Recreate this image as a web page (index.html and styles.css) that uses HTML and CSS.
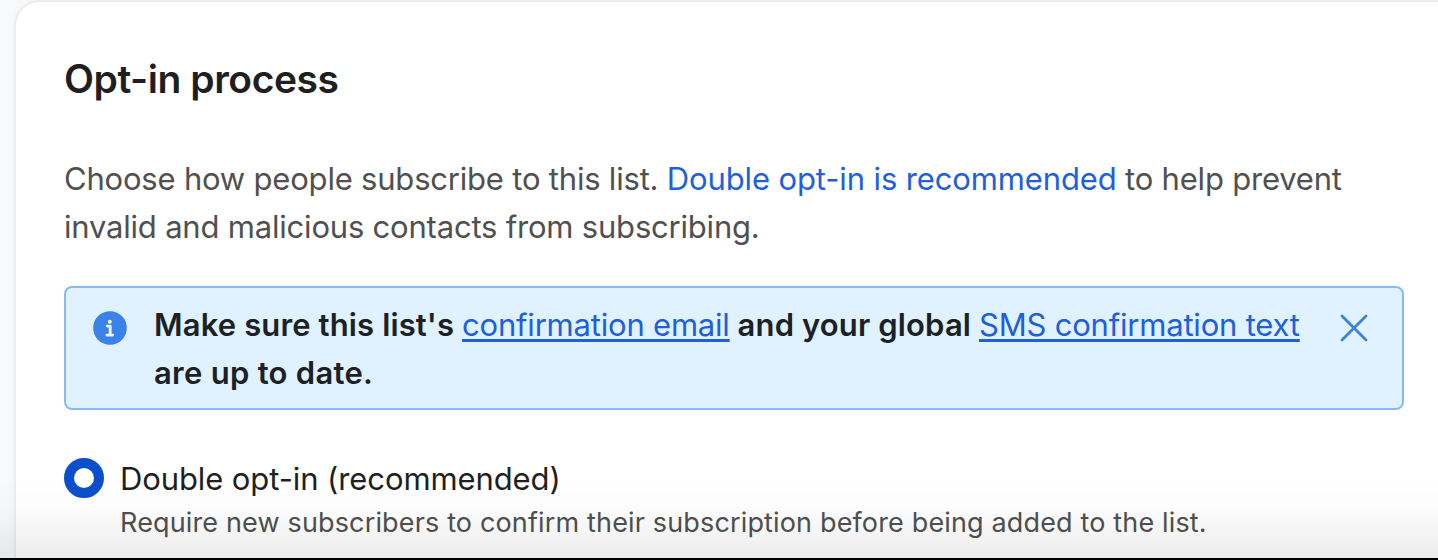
FILE: index.html
```html
<!DOCTYPE html>
<html lang="en">
<head>
  <meta charset="UTF-8" />
  <meta name="viewport" content="width=device-width, initial-scale=1.0" />
  <title>Opt-in process</title>
  <link rel="stylesheet" href="styles.css">
</head>
<body>
  <main class="card">
    <h1 class="title">Opt-in process</h1>
    <p class="intro">Choose how people subscribe to this list. <a href="#">Double opt-in is recommended</a> to help prevent<br>invalid and malicious contacts from subscribing.</p>
    <div class="notice">
      <svg class="notice-icon" viewBox="0 0 34 34">
        <circle cx="17" cy="17" r="16.8" fill="#3b82e8" />
        <circle cx="16.8" cy="10.8" r="2" fill="#e8f5ff" />
        <path d="M14.2 15.1h3v9M13.9 24.1h5.8" fill="none" stroke="#e8f5ff" stroke-width="2.9" stroke-linecap="round" stroke-linejoin="round" />
      </svg>
      <p class="notice-text">Make sure this list's <a href="#">confirmation email</a> and your global <a href="#">SMS confirmation text</a><br><span class="notice-end">are up to date.</span></p>
      <button class="close" aria-label="Close">
        <svg viewBox="0 0 28 28">
          <path d="M2 2l24 24M26 2L2 26" fill="none" stroke="#4280d8" stroke-width="2.8" stroke-linecap="round" />
        </svg>
      </button>
    </div>
    <label class="option">
      <input type="radio" class="radio" name="optin" checked>
      <span class="option-body">
        <span class="option-label">Double opt-in (recommended)</span>
        <span class="option-help">Require new subscribers to confirm their subscription before being added to the list.</span>
      </span>
    </label>
  </main>
  <div class="fade"></div>
</body>
</html>
```
FILE: styles.css
```css
* {
  box-sizing: border-box;
}

body {
  margin: 0;
  height: 560px;
  padding: 2px 0 0 16px;
  background: #f8f9fb;
  font-family: 'Inter', sans-serif;
  color: #1f1f1f;
  overflow: hidden;
}

.card {
  height: 558px;
  padding: 49px 0 0 48px;
  background: #fff;
  border-radius: 24px 0 0 0;
  box-shadow: 0 0 0 2px #ebecee, 0 0 8px rgba(0, 0, 0, 0.06);
}

.title {
  margin: 0;
  font-size: 39px;
  line-height: 56px;
  font-weight: 600;
  letter-spacing: -0.45px;
}

.intro {
  margin: 48px 0 0;
  font-size: 31px;
  line-height: 48px;
  letter-spacing: -0.2px;
  color: #505050;
  white-space: nowrap;
}

a {
  color: #1f5fdb;
  text-decoration: none;
}

.intro a {
  letter-spacing: -0.13px;
}

.notice {
  display: flex;
  align-items: flex-start;
  width: 1340px;
  height: 124px;
  margin-top: 35px;
  padding: 13px 34px 0 27px;
  background: #e0f2ff;
  border: 2px solid #88baf4;
  border-radius: 8px;
}

.notice-icon {
  width: 34px;
  height: 34px;
  margin-top: 10px;
  flex-shrink: 0;
}

.notice-text {
  margin: 0 0 0 27px;
  font-size: 31px;
  line-height: 48px;
  font-weight: 600;
  letter-spacing: 0.13px;
  color: #1c2126;
  white-space: nowrap;
}

.notice-text a {
  font-weight: 400;
  letter-spacing: -0.2px;
  text-decoration: underline;
  text-decoration-thickness: 3px;
  text-underline-offset: 3px;
  text-decoration-skip-ink: none;
}

.notice-end {
  letter-spacing: 0.28px;
}

.close {
  width: 28px;
  height: 28px;
  margin: 13px 0 0 auto;
  padding: 0;
  border: none;
  background: none;
  flex-shrink: 0;
}

.close svg {
  display: block;
}

.option {
  display: flex;
  gap: 16px;
  margin-top: 48px;
}

.radio {
  appearance: none;
  width: 40px;
  height: 40px;
  margin: 0;
  border: 10px solid #0b4fcb;
  border-radius: 50%;
  background: #fff;
}

.option-body {
  display: flex;
  flex-direction: column;
  white-space: nowrap;
}

.option-label {
  font-size: 31px;
  line-height: 42px;
  letter-spacing: -0.1px;
}

.option-help {
  font-size: 27px;
  line-height: 46px;
  letter-spacing: 0.15px;
  color: #505050;
}

/* shade at the bottom edge of the viewport */
.fade {
  position: absolute;
  left: 0;
  right: 0;
  bottom: 0;
  height: 84px;
  border-bottom: 2px solid #000;
  background: linear-gradient(rgba(0, 0, 0, 0), rgba(0, 0, 0, 0.012) 40%, rgba(0, 0, 0, 0.075));
  pointer-events: none;
}
```
